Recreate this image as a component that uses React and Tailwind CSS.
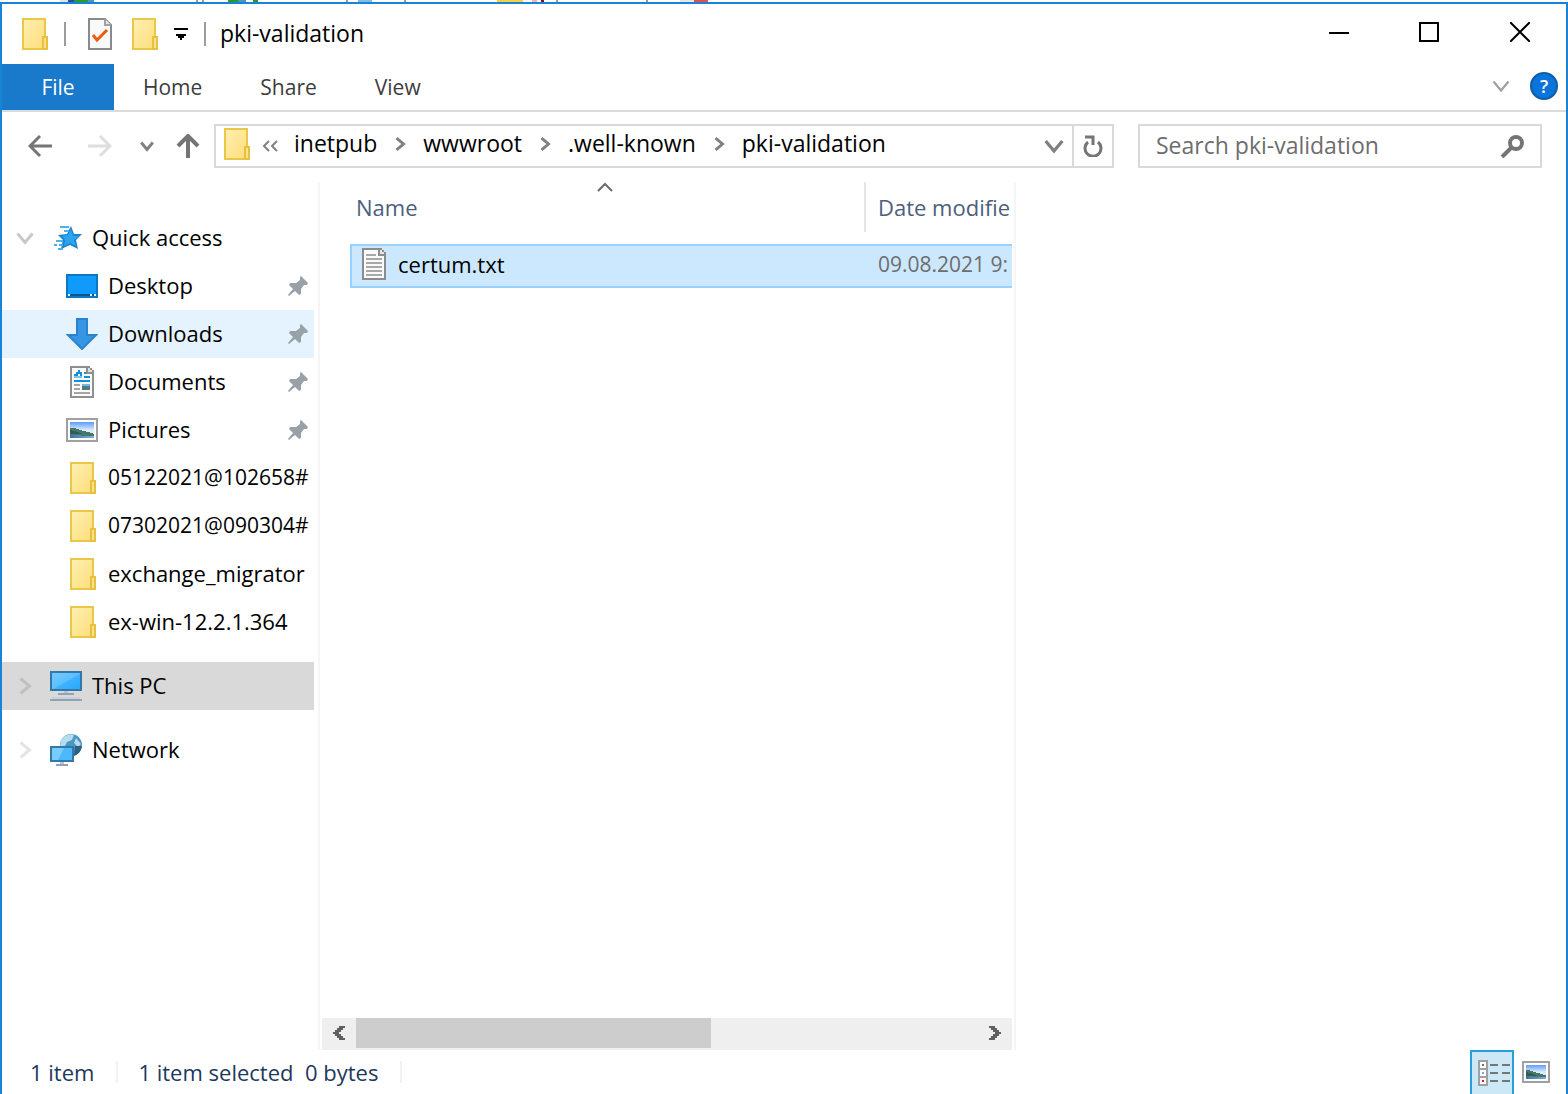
import React, { useState } from 'react'

const FolderIcon = () => (
  <svg width="24" height="32" viewBox="0 0 12 16" shapeRendering="crispEdges" className="shrink-0 overflow-visible">
    <defs>
      <linearGradient id="folderFill" x1="0" y1="0" x2="1" y2="1">
        <stop offset="0" stopColor="#ffeeb0" />
        <stop offset="1" stopColor="#fddf7c" />
      </linearGradient>
    </defs>
    <path d="M0 0h12v16H0z" fill="#ebc747" />
    <path d="M1 1h10v14H1z" fill="url(#folderFill)" />
    <path d="M10 9h3v7h-3z" fill="#e8c040" />
    <path d="M11 10h1v5h-1z" fill="#fde28a" />
  </svg>
)

const PropertiesIcon = () => (
  <svg width="24" height="32" viewBox="0 0 24 32">
    <path d="M1 1h16l6 6v24H1z" fill="#f7f9fb" stroke="#8a8a8a" strokeWidth="2" />
    <path d="M17 1v6h6" fill="#e8e8e8" stroke="#a0a0a0" strokeWidth="2" />
    <path d="M5 17l4 5 10-10" fill="none" stroke="#f2590d" strokeWidth="3" />
  </svg>
)

const TextFileIcon = () => (
  <svg width="24" height="32" viewBox="0 0 12 16" shapeRendering="crispEdges" className="shrink-0">
    <path d="M0 0h10v1h1v1h1v14H0z" fill="#8c8c8c" />
    <path d="M1 1h7v3h3v11H1z" fill="#fafafa" />
    <path d="M9 1h1v1h1v1H9z" fill="#e2e6ea" />
    <path d="M2 3h5v1H2zM2 5h8v1H2zM2 7h8v1H2zM2 9h8v1H2zM2 11h8v1H2zM2 13h8v1H2z" fill="#a8a8a8" />
  </svg>
)

const StarIcon = () => (
  <svg width="28" height="24" viewBox="0 0 28 24">
    <path d="M17 0l3 8h8l-6 6 2 9-8-4-9 4 2-9-5-5 9-1z" fill="#1a83cf" />
    <path d="M17 3l2 7h6l-5 4 2 6-6-3-6 3 1-6-3-4 6-1z" fill="#2ba3f0" />
    <path d="M6 1h9M10 5h5M2 15h7M5 19h4M0 19h3M4 23h5" stroke="#4fb0ec" strokeWidth="2" />
  </svg>
)

const DesktopIcon = () => (
  <svg width="32" height="24" viewBox="0 0 16 12" shapeRendering="crispEdges">
    <path d="M0 0h16v12H0z" fill="#0b78c6" />
    <path d="M1 1h14v9H1z" fill="#109bfc" />
    <path d="M1 10h14v1H1z" fill="#0a568f" />
    <path d="M1 10h1v1H1zM12 10h1v1h-1zM14 10h1v1h-1z" fill="#e6f4ff" />
  </svg>
)

const DownloadsIcon = () => (
  <svg width="32" height="32" viewBox="0 0 32 32">
    <path d="M11 1h10v16h9L16 31 2 17h9z" fill="#3795e6" stroke="#2b83cf" strokeWidth="2" />
  </svg>
)

const DocumentsIcon = () => (
  <svg width="24" height="32" viewBox="0 0 12 16" shapeRendering="crispEdges">
    <path d="M0 0h10v1h1v1h1v14H0z" fill="#8f8f8f" />
    <path d="M1 1h7v3h3v11H1z" fill="#fcfcfc" />
    <path d="M9 1h1v1h1v1H9z" fill="#e0e0e0" />
    <path d="M4 2h1v1h1v2H5V4H4v1H2V4h1V3h1zM7 3h1v1H7zM7 5h3v1H7zM2 7h8v1H2z" fill="#1290dd" />
    <path d="M2 5h4v1H2z" fill="#7cc3ee" />
    <path d="M2 9h3v1H2zM2 11h3v1H2zM2 13h8v1H2z" fill="#a5a5a5" />
    <path d="M6 9h4v1H6z" fill="#7eb0ff" />
    <path d="M6 10h4v2H6z" fill="#4d8178" />
  </svg>
)

const PictureArt = () => (
  <>
    <defs>
      <linearGradient id="skyFill" x1="0" y1="0" x2="0" y2="1">
        <stop offset="0" stopColor="#5f9bff" />
        <stop offset="0.5" stopColor="#dcebf8" />
        <stop offset="1" stopColor="#dcebf8" />
      </linearGradient>
      <linearGradient id="lakeFill" x1="0" y1="0" x2="1" y2="0">
        <stop offset="0" stopColor="#3a73a3" />
        <stop offset="1" stopColor="#7fb0d6" />
      </linearGradient>
    </defs>
    <path d="M0 0h12v8H0z" fill="url(#skyFill)" />
    <path d="M0 6h12v2H0z" fill="url(#lakeFill)" />
    <path d="M0 3h2l3 1 4 1 3 1v1H7L0 6z" fill="#47766c" />
    <path d="M0 4l4 1 2 1H0z" fill="#2f5f4c" />
  </>
)

const PicturesIcon = () => (
  <svg width="32" height="24" viewBox="0 0 16 12" shapeRendering="crispEdges">
    <path d="M0 0h16v12H0z" fill="#a0a0a0" />
    <path d="M1 1h14v10H1z" fill="#fff" />
    <g transform="translate(2 2)"><PictureArt /></g>
  </svg>
)

const ComputerIcon = () => (
  <svg width="32" height="30" viewBox="0 0 16 15" shapeRendering="crispEdges">
    <defs>
      <linearGradient id="screenFill" x1="0" y1="0" x2="1" y2="1">
        <stop offset="0" stopColor="#76c9ff" />
        <stop offset="0.5" stopColor="#5cc0ff" />
        <stop offset="0.55" stopColor="#3db2ff" />
        <stop offset="1" stopColor="#2ba9fb" />
      </linearGradient>
    </defs>
    <path d="M0 0h16v10H0z" fill="#3278a8" />
    <path d="M1 1h14v8H1z" fill="url(#screenFill)" />
    <path d="M7 10h2v1H7z" fill="#b9c6d4" />
    <path d="M4 11h8v1H4zM0 14h16v1H0z" fill="#8fa3b8" />
    <path d="M1 13h14v1H1z" fill="#c9cfd6" />
  </svg>
)

const NetworkIcon = () => (
  <svg width="32" height="32" viewBox="0 0 32 32">
    <circle cx="21" cy="11" r="11" fill="#4a97c1" />
    <path d="M11 6c3-5 9-7 13-5l-2 5-5 2-2 4h-5zM26 4l5 6-3 3-4-4z" fill="#b4dcef" />
    <path d="M25 12h7c-1 5-3 8-8 10z" fill="#2c617f" />
    <path d="M1 13h22v14H1z" fill="#4db9fb" stroke="#3278a8" strokeWidth="2" />
    <path d="M2 14h12L8 26H2z" fill="#7bcbfb" />
    <path d="M10 28h4v2h-4z" fill="#b9c6d4" />
    <path d="M6 30h12v2H6z" fill="#8fa3b8" />
  </svg>
)

const PinIcon = () => (
  <svg width="20" height="20" viewBox="0 0 20 20" className="shrink-0">
    <path d="M13 0l7 7-1 2h-3l-3 4v5l-2 1-4-4-6 5-1-1 5-6-4-4 1-2h6l4-3V1z" fill="#97a1a8" />
  </svg>
)

const Chevron = ({ size = 12, color = '#808080', width = 3, dir = 'right' }) => {
  const points = {
    right: '3,1 9,6 3,11',
    down: '1,3 6,9 11,3',
    up: '1,9 6,3 11,9',
  }
  return (
    <svg width={size} height={size} viewBox="0 0 12 12" className="shrink-0">
      <polyline points={points[dir]} fill="none" stroke={color} strokeWidth={width} />
    </svg>
  )
}

const quickAccess = [
  { label: 'Desktop', icon: DesktopIcon, pinned: true },
  { label: 'Downloads', icon: DownloadsIcon, pinned: true, hovered: true },
  { label: 'Documents', icon: DocumentsIcon, pinned: true },
  { label: 'Pictures', icon: PicturesIcon, pinned: true },
  { label: '05122021@102658#', icon: FolderIcon, numeric: true },
  { label: '07302021@090304#', icon: FolderIcon, numeric: true },
  { label: 'exchange_migrator', icon: FolderIcon },
  { label: 'ex-win-12.2.1.364', icon: FolderIcon },
]

const crumbs = ['inetpub', 'wwwroot', '.well-known', 'pki-validation']

const files = [{ name: 'certum.txt', modified: '09.08.2021 9:' }]

// Slivers of the window behind, seen above the top border
const DesktopEdge = () => (
  <svg width="720" height="2" viewBox="0 0 720 2" shapeRendering="crispEdges" className="block">
    <path d="M60 0h8v2h-8z" fill="#dfe3ee" />
    <path d="M68 0h6v2h-6z" fill="#2c4aa0" />
    <path d="M74 0h14v2H74zM228 0h10v2h-10zM253 0h5v2h-5z" fill="#2a9a2a" />
    <path d="M88 0h6v2h-6zM238 0h8v2h-8z" fill="#4d93c4" />
    <path d="M196 0h2v2h-2zM202 0h2v2h-2zM346 0h2v2h-2zM404 0h2v2h-2zM556 0h2v2h-2zM646 0h2v2h-2z" fill="#9a9a9a" />
    <path d="M358 0h14v2h-14z" fill="#7fc0ea" />
    <path d="M497 0h26v2h-26z" fill="#f6cf4a" />
    <path d="M532 0h5v2h-5z" fill="#e8b4bc" />
    <path d="M541 0h3v2h-3z" fill="#8c1020" />
    <path d="M680 0h14v2h-14z" fill="#e2e7ee" />
    <path d="M694 0h14v2h-14z" fill="#e0524e" />
  </svg>
)

const TitleBar = () => (
  <header className="flex h-[60px] items-start">
    <div className="flex h-[60px] items-center pl-5">
      <FolderIcon />
      <div className="ml-[18px] h-6 w-[2px] bg-[#9c9c9c]" />
      <button aria-label="Properties" className="ml-[22px]"><PropertiesIcon /></button>
      <button aria-label="New folder" className="ml-5"><FolderIcon /></button>
      <button aria-label="Customize Quick Access Toolbar" className="ml-[18px]">
        <svg width="14" height="12" viewBox="0 0 14 12" shapeRendering="crispEdges">
          <path d="M0 0h14v2H0zM2 6h10v2h-2v2H8v2H6v-2H4V8H2z" fill="#000" />
        </svg>
      </button>
      <div className="ml-4 h-6 w-[2px] bg-[#9c9c9c]" />
      <h1 className="ml-[14px] pb-[2px] text-[23px] text-black">pki-validation</h1>
    </div>
    <div className="ml-auto flex">
      <button aria-label="Minimize" className="flex h-14 w-[90px] items-center justify-center">
        <svg width="20" height="20" viewBox="0 0 20 20"><path d="M0 10h20v2H0z" /></svg>
      </button>
      <button aria-label="Maximize" className="flex h-14 w-[90px] items-center justify-center">
        <svg width="20" height="20" viewBox="0 0 20 20"><path d="M1 1h18v18H1z" fill="none" stroke="#000" strokeWidth="2" /></svg>
      </button>
      <button aria-label="Close" className="flex h-14 w-[92px] items-center justify-center">
        <svg width="20" height="20" viewBox="0 0 20 20"><path d="M0 0l20 20M20 0L0 20" stroke="#000" strokeWidth="2" /></svg>
      </button>
    </div>
  </header>
)

const Ribbon = () => (
  <nav className="flex h-12 items-stretch border-b-2 border-[#dadbdc] text-[21px] text-[#3c3c3c]">
    <button className="w-28 bg-[#1979ca] text-white">File</button>
    <button className="px-[29px]">Home</button>
    <button className="px-[29px]">Share</button>
    <button className="px-[29px]">View</button>
    <div className="ml-auto flex items-center gap-5 pr-2 pb-[2px]">
      <button aria-label="Expand the Ribbon">
        <Chevron size={18} dir="down" color="#a0a0a0" width={1.5} />
      </button>
      <button aria-label="Help" className="flex size-7 items-center justify-center rounded-full border-2 border-[#0c5ea8] bg-[#0a74da] text-lg font-semibold leading-none text-white">
        ?
      </button>
    </div>
  </nav>
)

const AddressRow = ({ query, onQuery }) => (
  <div className="flex items-center pt-3 pr-6 text-[23px]">
    <div className="flex w-[212px] shrink-0 items-center pl-[26px]">
      <button aria-label="Back">
        <svg width="24" height="24" viewBox="0 0 24 24"><path d="M12 2L2 12l10 10M2 12h22" fill="none" stroke="#757575" strokeWidth="3" /></svg>
      </button>
      <button aria-label="Forward" className="ml-9">
        <svg width="24" height="24" viewBox="0 0 24 24"><path d="M12 2l10 10-10 10M22 12H0" fill="none" stroke="#dedede" strokeWidth="3" /></svg>
      </button>
      <button aria-label="Recent locations" className="ml-7">
        <Chevron size={14} dir="down" width={2.5} />
      </button>
      <button aria-label="Up" className="ml-[22px]">
        <svg width="24" height="24" viewBox="0 0 24 24"><path d="M2 12L12 2l10 10M12 2v22" fill="none" stroke="#757575" strokeWidth="4" /></svg>
      </button>
    </div>
    <div className="flex h-11 min-w-0 flex-1 items-stretch border-2 border-[#d9d9d9]">
      <div className="flex min-w-0 flex-1 items-center pb-1 pl-2">
        <FolderIcon />
        <svg width="16" height="12" viewBox="0 0 16 12" className="ml-[14px] mt-1">
          <path d="M7 1L2 6l5 5M15 1l-5 5 5 5" fill="none" stroke="#808080" strokeWidth="2" />
        </svg>
        <ol className="ml-4 flex items-center gap-4 text-black">
          {crumbs.map((crumb, i) => (
            <li key={crumb} className="flex items-center gap-4">
              {i > 0 && <Chevron size={14} width={2.5} />}
              <a href="#" className="pb-[2px]">{crumb}</a>
            </li>
          ))}
        </ol>
      </div>
      <button aria-label="Previous locations" className="px-2">
        <Chevron size={20} dir="down" width={2} />
      </button>
      <button aria-label="Refresh" className="flex w-10 items-center justify-center border-l-2 border-[#d9d9d9]">
        <svg width="20" height="22" viewBox="0 0 20 22">
          <path d="M5 7a8 8 0 1 0 10 0" fill="none" stroke="#757575" strokeWidth="3" />
          <path d="M2 2h8v8" fill="none" stroke="#757575" strokeWidth="3" />
        </svg>
      </button>
    </div>
    <div className="ml-6 flex h-11 w-[404px] items-center border-2 border-[#d9d9d9] px-4">
      <input
        type="text"
        aria-label="Search pki-validation"
        placeholder="Search pki-validation"
        value={query}
        onChange={(e) => onQuery(e.target.value)}
        className="min-w-0 flex-1 pb-[2px] outline-none placeholder:text-[#6d6d6d]"
      />
      <svg width="24" height="24" viewBox="0 0 24 24">
        <circle cx="16" cy="9" r="6" fill="none" stroke="#757575" strokeWidth="4" />
        <path d="M12 13L2 23" stroke="#757575" strokeWidth="4" />
      </svg>
    </div>
  </div>
)

const NavPane = () => (
  <nav className="w-[318px] shrink-0 overflow-hidden border-r-2 border-[#f5f5f5] pt-8 pr-1 text-black">
    <a href="#" className="flex h-12 items-center pl-[14px]">
      <Chevron size={18} dir="down" color="#c8c8c8" width={2} />
      <span className="ml-5"><StarIcon /></span>
      <span className="ml-[10px] pb-[2px]">Quick access</span>
    </a>
    <ul>
      {quickAccess.map((item) => (
        <li key={item.label}>
          <a
            href="#"
            className={`flex h-12 items-center pl-16 pr-[6px] ${item.hovered ? 'bg-[#e5f3ff]' : ''}`}
          >
            <span className="flex w-8 shrink-0 justify-center"><item.icon /></span>
            <span className={`ml-[10px] flex-1 pb-[2px] ${item.numeric ? 'text-[21px]' : ''}`}>{item.label}</span>
            {item.pinned && <PinIcon />}
          </a>
        </li>
      ))}
    </ul>
    <a href="#" className="mt-4 flex h-12 items-center bg-[#d9d9d9] pl-[14px]">
      <Chevron size={18} color="#c0c0c0" width={2} />
      <span className="ml-4"><ComputerIcon /></span>
      <span className="ml-[10px] pb-[2px]">This PC</span>
    </a>
    <a href="#" className="mt-4 flex h-12 items-center pl-[14px]">
      <Chevron size={18} color="#e4e4e4" width={2} />
      <span className="ml-4"><NetworkIcon /></span>
      <span className="ml-[10px] pb-[2px]">Network</span>
    </a>
  </nav>
)

const FileList = () => (
  <main className="flex min-w-0 flex-1 flex-col px-[2px]">
    <div className="flex-1 overflow-hidden pl-7">
      <table className="w-[720px] table-fixed border-separate border-spacing-0 text-left">
        <thead>
          <tr className="text-[#4c607a]">
            <th className="w-[516px] p-0 pb-3 font-normal">
              <div className="relative flex h-[50px] items-center border-r-2 border-[#e5e5e5] pl-[6px]">
                Name
                <span className="absolute inset-x-0 top-0 flex justify-center pr-1">
                  <svg width="16" height="10" viewBox="0 0 16 10"><path d="M1 9l7-7 7 7" fill="none" stroke="#6a6a6a" strokeWidth="2" /></svg>
                </span>
              </div>
            </th>
            <th className="p-0 pb-3 pl-3 font-normal whitespace-nowrap">Date modifie</th>
          </tr>
        </thead>
        <tbody>
          {files.map((file) => (
            <tr key={file.name} className="bg-[#cce8ff]">
              <td className="h-11 border-y-2 border-l-2 border-[#99d1ff] p-0 pb-1 pl-[10px] text-black">
                <span className="flex items-center gap-3"><TextFileIcon />{file.name}</span>
              </td>
              <td className="border-y-2 border-[#99d1ff] p-0 pb-1 pl-3 text-[21px] whitespace-nowrap text-[#6d6d6d]">{file.modified}</td>
            </tr>
          ))}
        </tbody>
      </table>
    </div>
    <div className="flex h-8 bg-[#efefef]">
      <button aria-label="Scroll left" className="flex w-[34px] items-center justify-center pb-[2px]">
        <svg width="12" height="14" viewBox="0 0 6 7" shapeRendering="crispEdges">
          <path d="M3 0h3v1H5v1H4v1H3v1h1v1h1v1h1v1H3V6H2V5H1V4H0V3h1V2h1V1h1z" fill="#606060" />
        </svg>
      </button>
      <div className="flex-1">
        <div className="h-[30px] w-[57%] bg-[#cdcdcd]" />
      </div>
      <button aria-label="Scroll right" className="flex w-[34px] items-center justify-center pb-[2px]">
        <svg width="12" height="14" viewBox="0 0 6 7" shapeRendering="crispEdges">
          <path d="M0 0h3v1h1v1h1v1h1v1H5v1H4v1H3v1H0V6h1V5h1V4h1V3H2V2H1V1H0z" fill="#606060" />
        </svg>
      </button>
    </div>
  </main>
)

const StatusBar = () => (
  <footer className="flex h-11 items-center text-[#1e395b]">
    <span className="ml-7">1 item</span>
    <div className="ml-[22px] h-[22px] w-[2px] bg-[#f2f2f2]" />
    <span className="ml-5 whitespace-pre">1 item selected  0 bytes</span>
    <div className="ml-[22px] h-[22px] w-[2px] bg-[#f2f2f2]" />
    <div className="ml-auto flex items-center pr-4">
      <button aria-label="Details view" className="flex h-11 w-11 items-center justify-center border-2 border-b-0 border-[#26a0da] bg-[#cce8f6] pl-1">
        <svg width="32" height="26" viewBox="0 0 16 13" shapeRendering="crispEdges">
          <path d="M0 0h5v13H0z" fill="#a0a0a0" />
          <path d="M1 1h3v3H1zM1 5h3v3H1zM1 9h3v3H1z" fill="#fff" />
          <path d="M2 2h1v1H2z" fill="#4d8178" />
          <path d="M2 6h1v1H2z" fill="#6fa5ff" />
          <path d="M2 10h1v1H2z" fill="#e01b1b" />
          <path d="M6 2h4v1H6zM12 2h4v1h-4zM6 6h4v1H6zM12 6h4v1h-4zM6 10h4v1H6zM12 10h4v1h-4z" fill="#757575" />
        </svg>
      </button>
      <button aria-label="Large icons view" className="ml-2">
        <svg width="28" height="22" viewBox="0 0 14 11" shapeRendering="crispEdges">
          <path d="M0 0h14v11H0z" fill="#a0a0a0" />
          <path d="M1 1h12v9H1z" fill="#fff" />
          <svg x="2" y="2" width="10" height="7" viewBox="0 0 12 8" preserveAspectRatio="none"><PictureArt /></svg>
        </svg>
      </button>
    </div>
  </footer>
)

const App = () => {
  const [query, setQuery] = useState('')

  return (
    <div className="flex h-screen flex-col bg-white font-['Open_Sans','Noto_Sans',sans-serif] text-[22px] leading-8">
      <DesktopEdge />
      <div className="flex min-h-0 flex-1 flex-col border-x-2 border-t-2 border-[#1883d7]">
        <TitleBar />
        <Ribbon />
        <AddressRow query={query} onQuery={setQuery} />
        <div className="mt-[14px] flex min-h-0 flex-1">
          <NavPane />
          <FileList />
          <aside className="w-[552px] shrink-0 border-l-2 border-[#f5f5f5]" />
        </div>
        <StatusBar />
      </div>
    </div>
  )
}

export default App
